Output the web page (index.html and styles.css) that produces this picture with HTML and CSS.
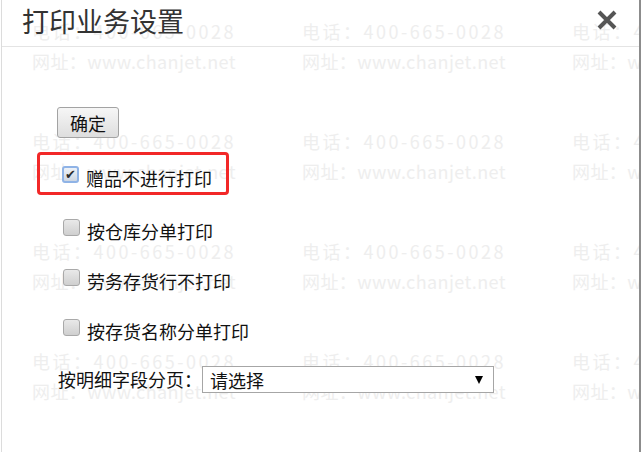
FILE: index.html
```html
<!DOCTYPE html>
<html lang="zh-CN">

<head>
    <meta charset="UTF-8">
    <meta name="viewport" content="width=device-width, initial-scale=1.0">
    <title>打印业务设置</title>
    <link rel="stylesheet" href="styles.css">
</head>

<body>
    <div class="dialog">
        <div class="watermark">
            <div class="wm-tile"><div class="wm-tel">电话：400-665-0028</div><div class="wm-url">网址：www.chanjet.net</div></div>
            <div class="wm-tile"><div class="wm-tel">电话：400-665-0028</div><div class="wm-url">网址：www.chanjet.net</div></div>
            <div class="wm-tile"><div class="wm-tel">电话：400-665-0028</div><div class="wm-url">网址：www.chanjet.net</div></div>
            <div class="wm-tile"><div class="wm-tel">电话：400-665-0028</div><div class="wm-url">网址：www.chanjet.net</div></div>
            <div class="wm-tile"><div class="wm-tel">电话：400-665-0028</div><div class="wm-url">网址：www.chanjet.net</div></div>
            <div class="wm-tile"><div class="wm-tel">电话：400-665-0028</div><div class="wm-url">网址：www.chanjet.net</div></div>
            <div class="wm-tile"><div class="wm-tel">电话：400-665-0028</div><div class="wm-url">网址：www.chanjet.net</div></div>
            <div class="wm-tile"><div class="wm-tel">电话：400-665-0028</div><div class="wm-url">网址：www.chanjet.net</div></div>
            <div class="wm-tile"><div class="wm-tel">电话：400-665-0028</div><div class="wm-url">网址：www.chanjet.net</div></div>
            <div class="wm-tile"><div class="wm-tel">电话：400-665-0028</div><div class="wm-url">网址：www.chanjet.net</div></div>
            <div class="wm-tile"><div class="wm-tel">电话：400-665-0028</div><div class="wm-url">网址：www.chanjet.net</div></div>
            <div class="wm-tile"><div class="wm-tel">电话：400-665-0028</div><div class="wm-url">网址：www.chanjet.net</div></div>
        </div>

        <div class="dialog-head">
            <h1 class="dialog-title">打印业务设置</h1>
            <button class="dialog-close" title="关闭">
                <svg width="22" height="20" viewBox="0 0 22 20">
                    <path d="M3 2 L19 18 M19 2 L3 18" stroke="#555" stroke-width="4" fill="none" />
                </svg>
            </button>
        </div>

        <div class="dialog-body">
            <button class="btn-ok">确定</button>

            <label class="option option-marked">
                <input type="checkbox" checked>
                <span>赠品不进行打印</span>
            </label>
            <label class="option">
                <input type="checkbox">
                <span>按仓库分单打印</span>
            </label>
            <label class="option">
                <input type="checkbox">
                <span>劳务存货行不打印</span>
            </label>
            <label class="option">
                <input type="checkbox">
                <span>按存货名称分单打印</span>
            </label>

            <div class="field">
                <span class="field-label">按明细字段分页：</span>
                <div class="select-wrap">
                    <select>
                        <option>请选择</option>
                    </select>
                </div>
            </div>
        </div>
    </div>
</body>

</html>
```

FILE: styles.css
```css
html,
body {
    margin: 0;
    background-color: #fff;
}

body {
    width: 643px;
    height: 452px;
    overflow: hidden;
    font-family: "Noto Sans CJK SC", "Noto Sans", sans-serif;
    color: #111;
}

.dialog {
    position: relative;
    box-sizing: border-box;
    width: 640px;
    height: 452px;
    margin-left: 1px;
    border-left: 1px solid #dcdcdc;
    border-right: 2px solid #8c8c8c;
}

/* faint background text */
.watermark {
    position: absolute;
    inset: 0;
    z-index: 0;
    overflow: hidden;
    pointer-events: none;
    display: grid;
    grid-template-columns: repeat(3, 270px);
    grid-auto-rows: 110px;
    padding: 16px 0 0 30px;
    color: #eeeeee;
    font-size: 18px;
    white-space: nowrap;
}

.wm-tel,
.wm-url {
    line-height: 30px;
}

.wm-tel {
    letter-spacing: 2.5px;
}

.wm-url {
    letter-spacing: 0.4px;
}

.dialog-head {
    position: relative;
    z-index: 1;
    display: flex;
    justify-content: space-between;
    align-items: flex-start;
    height: 46px;
    padding: 0 21px 0 20px;
    border-bottom: 1px solid #e4e4e4;
}

.dialog-title {
    margin: 5px 0 0;
    font-size: 27px;
    font-weight: normal;
    line-height: 32px;
    color: #333;
}

.dialog-close {
    margin-top: 10px;
    padding: 0;
    border: none;
    background: none;
    width: 22px;
    height: 20px;
    display: flex;
}

.dialog-body {
    position: relative;
    z-index: 1;
    padding-left: 35px;
}

.btn-ok {
    display: block;
    box-sizing: border-box;
    width: 62px;
    height: 31px;
    margin: 60px 0 0 20px;
    padding: 0;
    font-family: "Noto Sans CJK SC", sans-serif;
    font-size: 18px;
    color: #111;
    border: 1px solid #a3a3a3;
    border-radius: 3px;
    background: linear-gradient(#f6f6f6, #dedede);
}

.option {
    display: flex;
    align-items: center;
    box-sizing: border-box;
    height: 50px;
    padding-left: 26px;
    font-size: 18px;
    line-height: 24px;
}

.option span {
    margin-left: 7px;
}

.option-marked {
    width: 192px;
    height: 43px;
    margin-top: 14px;
    margin-bottom: 11px;
    padding: 11px 0 2px 22px;
    border: 3px solid #f22828;
    border-radius: 4px;
}

.option input {
    appearance: none;
    box-sizing: border-box;
    width: 17px;
    height: 17px;
    margin: 0 0 8px 0;
    border: 1px solid #a9a9a9;
    border-radius: 3px;
    background: linear-gradient(#e9e9e9, #cfcfcf);
    display: flex;
    align-items: center;
    justify-content: center;
}

.option input:checked {
    border: 2px solid #8fb3e6;
    background: linear-gradient(#eef2f8, #cdd6e2);
}

.option input:checked::before {
    content: "✔";
    font-family: "DejaVu Sans", sans-serif;
    font-size: 13px;
    line-height: 13px;
    color: #2b2b2b;
}

.field {
    display: flex;
    align-items: center;
    margin: 10px 0 0 21px;
    font-size: 18px;
}

.field-label {
    line-height: 27px;
    width: 144px;
}

.select-wrap {
    position: relative;
}

.select-wrap select {
    appearance: none;
    box-sizing: border-box;
    width: 292px;
    height: 27px;
    padding: 0 0 0 7px;
    border: 1px solid #a6a6a6;
    border-radius: 0;
    background: #fff;
    font-family: "Noto Sans CJK SC", sans-serif;
    font-size: 18px;
    color: #111;
}

.select-wrap::after {
    content: "";
    position: absolute;
    right: 11px;
    top: 10px;
    border-left: 4px solid transparent;
    border-right: 4px solid transparent;
    border-top: 8px solid #000;
    pointer-events: none;
}
```
